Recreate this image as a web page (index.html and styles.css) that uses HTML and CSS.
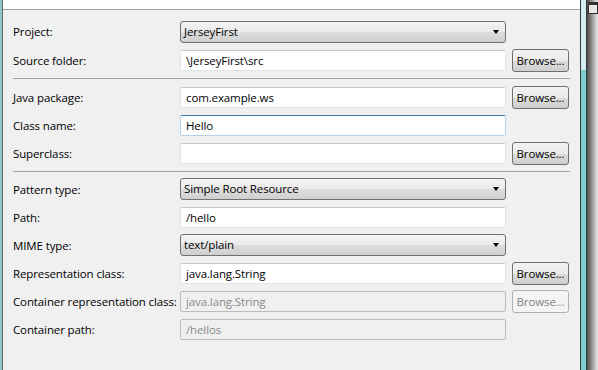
FILE: index.html
```html
<!DOCTYPE html>
<html>
<head>
<meta charset="utf-8">
<link rel="stylesheet" href="styles.css">
</head>
<body>
<div class="window">
  <div class="edge-left"></div>
  <div class="main">
    <div class="banner"></div>
    <div class="form">
      <div class="section s1">
        <div class="row r29"><span class="label">Project:</span><div class="combo">JerseyFirst<span class="arrow"></span></div></div>
        <div class="row r29"><span class="label">Source folder:</span><div class="field">\JerseyFirst\src</div><div class="btn">Browse...</div></div>
      </div>
      <div class="sep"></div>
      <div class="section s2">
        <div class="row"><span class="label">Java package:</span><div class="field">com.example.ws</div><div class="btn">Browse...</div></div>
        <div class="row"><span class="label">Class name:</span><div class="field focus">Hello</div></div>
        <div class="row"><span class="label">Superclass:</span><div class="field"></div><div class="btn">Browse...</div></div>
      </div>
      <div class="sep"></div>
      <div class="section s3">
        <div class="row"><span class="label">Pattern type:</span><div class="combo">Simple Root Resource<span class="arrow"></span></div></div>
        <div class="row"><span class="label">Path:</span><div class="field">/hello</div></div>
        <div class="row"><span class="label">MIME type:</span><div class="combo">text/plain<span class="arrow"></span></div></div>
        <div class="row"><span class="label">Representation class:</span><div class="field">java.lang.String</div><div class="btn">Browse...</div></div>
        <div class="row"><span class="label">Container representation class:</span><div class="field disabled">java.lang.String</div><div class="btn disabled">Browse...</div></div>
        <div class="row"><span class="label">Container path:</span><div class="field disabled">/hellos</div></div>
      </div>
    </div>
  </div>
  <div class="scroll">
    <div class="line"></div>
    <div class="track"><div class="track-top"></div><div class="thumb"></div></div>
    <div class="line"></div>
    <div class="shade"><div class="box"></div></div>
  </div>
</div>
</body>
</html>
```
FILE: styles.css
```css
html, body {
  margin: 0;
  padding: 0;
  background: #f0f0f0;
}
body {
  font-family: "Open Sans", "Noto Sans", sans-serif;
  font-size: 11.5px;
  letter-spacing: -0.12px;
  color: #000;
}
.window {
  display: flex;
  width: 598px;
  height: 370px;
  overflow: hidden;
}
.edge-left {
  width: 2px;
  background: #8fc6c6;
  border-right: 1px solid #5a6a6a;
}
.main {
  width: 577px;
  display: flex;
  flex-direction: column;
  background: #f0f0f0;
}
.banner {
  height: 9px;
  background: #fff;
  border-bottom: 1px solid #a0a0a0;
}
.form {
  padding: 0 10px;
}
.s1 { padding-top: 7px; padding-bottom: 3px; }
.s2 { padding-top: 4px; padding-bottom: 4px; }
.s3 { padding-top: 3px; }
.sep {
  height: 1px;
  background: #a0a0a0;
}
.row {
  display: grid;
  grid-template-columns: 161px 326px 57px;
  column-gap: 6px;
  align-items: center;
  height: 28px;
}
.row.r29 { height: 29px; }
.label {
  white-space: nowrap;
}
.field {
  box-sizing: border-box;
  height: 21px;
  background: #fff;
  border: 1px solid #e0e3e8;
  border-top-color: #c4c6cc;
  border-radius: 2px;
  padding: 0 5px;
  line-height: 19px;
  white-space: nowrap;
}
.field.focus {
  border-color: #b5d0e8;
  border-top-color: #3d7bad;
}
.field.disabled {
  background: #f0f0f0;
  border-color: #b8bcbf;
  color: #8a8a8a;
}
.combo {
  position: relative;
  box-sizing: border-box;
  height: 22px;
  border: 1px solid #707070;
  border-radius: 3px;
  background: linear-gradient(#f3f3f3 0%, #ebebeb 50%, #dddddd 51%, #cfcfcf 100%);
  padding: 0 3px;
  line-height: 20px;
  white-space: nowrap;
}
.arrow {
  position: absolute;
  right: 6px;
  top: 8px;
  width: 0;
  height: 0;
  border-left: 3.5px solid transparent;
  border-right: 3.5px solid transparent;
  border-top: 4px solid #000;
}
.btn {
  box-sizing: border-box;
  height: 23px;
  border: 1px solid #707070;
  border-radius: 3px;
  background: linear-gradient(#f2f2f2 0%, #ebebeb 50%, #dddddd 51%, #cfcfcf 100%);
  text-align: center;
  line-height: 21px;
  white-space: nowrap;
}
.btn.disabled {
  background: #f4f4f4;
  border-color: #adb2b5;
  color: #838383;
}
.scroll {
  display: flex;
  width: 18px;
}
.scroll .line {
  width: 1px;
  background: #2f3a3a;
}
.track {
  width: 5px;
  display: flex;
  flex-direction: column;
}
.track-top {
  height: 70px;
  background: #d6eeee;
}
.thumb {
  flex: 1;
  background: #7fcdcf;
}
.shade {
  flex: 1;
  background: linear-gradient(to right, #4c4c4c, #8a8a8a 40%, #c8c8c8 75%, #e6e6e6);
  padding: 2px 0 0 1px;
}
.box {
  width: 8px;
  height: 8px;
  border: 1px solid #333;
  border-top-width: 3px;
  background: #e8e8e8;
}
```
